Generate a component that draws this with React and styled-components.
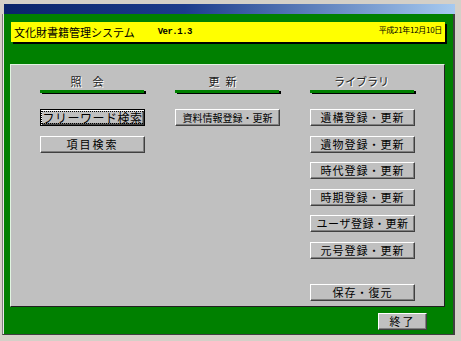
import React from 'react';
import styled, { createGlobalStyle } from 'styled-components';

const Global = createGlobalStyle`
  html, body { margin: 0; padding: 0; background: #d4d0c8; }
  body { font-family: "Noto Sans CJK JP", "Noto Sans", sans-serif; }
  * { box-sizing: border-box; }
`;

const Frame = styled.div`
  width: 461px;
  height: 341px;
  background: #d4d0c8;
  padding: 4px 6px 6px 2px;
  display: flex;
  flex-direction: column;
`;

const TitleBar = styled.div`
  height: 10px;
  margin-left: 2px;
  background: linear-gradient(to right, #0a246a 0%, #1c3c8c 40%, #a6caf0 100%);
`;

const Client = styled.div`
  flex: 1;
  background: #008000;
  border-left: 1px solid #808080;
  border-right: 2px solid #404040;
  border-bottom: 1px solid #404040;
  box-shadow: inset 1px 0 0 #e8e8e8;
  padding: 8px 8px 0 7px;
  display: flex;
  flex-direction: column;
`;

const HeaderBar = styled.div`
  height: 20px;
  margin-left: 1px;
  background: #ffff00;
  box-shadow: 2px 2px 0 #000;
  display: flex;
  align-items: flex-start;
  padding: 0 3px 0 3px;
  color: #000;
`;

const AppTitle = styled.span`
  font-size: 11px;
  line-height: 20px;
  white-space: nowrap;
`;

const Version = styled.span`
  font-family: "Liberation Mono", "DejaVu Sans Mono", monospace;
  font-weight: bold;
  font-size: 9px;
  letter-spacing: -0.5px;
  line-height: 20px;
  margin-left: 23px;
`;

const DateText = styled.span`
  margin-left: auto;
  font-size: 8px;
  line-height: 10px;
  margin-top: 3px;
  letter-spacing: -0.3px;
  white-space: nowrap;
`;

const Panel = styled.div`
  margin-top: 22px;
  height: 243px;
  background: #c0c0c0;
  border: 1px solid;
  border-color: #e0f4e0 #202020 #202020 #e0f4e0;
  padding: 0 29px;
  display: grid;
  grid-template-columns: 105px 105px 105px;
  column-gap: 30px;
  align-items: start;
`;

const Column = styled.div`
  display: flex;
  flex-direction: column;
`;

const ColTitle = styled.div`
  margin-top: 9px;
  height: 14px;
  font-size: 11px;
  line-height: 14px;
  text-align: center;
  color: #202020;
  text-shadow: 1px 1px 0 #ffffff;
  letter-spacing: ${p => p.$ls || 0}px;
  padding-right: ${p => p.$shift || 0}px;
  white-space: nowrap;
`;

const GreenRule = styled.div`
  margin-top: 2px;
  width: 104px;
  height: 3px;
  background: #008000;
  box-shadow: 2px 1px 0 #000;
`;

const ButtonStack = styled.div`
  margin-top: 16px;
  display: flex;
  flex-direction: column;
  gap: 9.6px;
`;

const Button = styled.button`
  height: 17px;
  width: ${p => p.$w || 105}px;
  padding: 0;
  margin: 0;
  margin-top: ${p => p.$mt || 0}px;
  background: #c0c0c0;
  border: 1px solid;
  border-color: #ffffff #404040 #404040 #ffffff;
  box-shadow: inset -1px -1px 0 #808080;
  font-family: "Noto Sans CJK JP", "Noto Sans", sans-serif;
  font-size: ${p => p.$fs || 11}px;
  letter-spacing: ${p => (p.$ls === undefined ? 1 : p.$ls)}px;
  line-height: 15px;
  color: #000;
  display: flex;
  align-items: center;
  justify-content: center;
  white-space: nowrap;
  cursor: default;
  outline: none;
`;

const FocusButton = styled(Button)`
  border: 1px solid #000;
  box-shadow: inset 1px 1px 0 #ffffff, inset -1px -1px 0 #404040, inset -2px -2px 0 #808080;
`;

const FocusLabel = styled.span`
  border: 1px dotted #000;
  padding: 0 1px;
  line-height: 11px;
  letter-spacing: 0.5px;
`;

const ExitButton = styled(Button)`
  align-self: flex-end;
  margin-top: 6px;
  margin-right: 18px;
  letter-spacing: 2px;
`;

export default function App() {
  return (
    <>
      <Global />
      <Frame>
        <TitleBar />
        <Client>
          <HeaderBar>
            <AppTitle>文化財書籍管理システム</AppTitle>
            <Version>Ver.1.3</Version>
            <DateText>平成21年12月10日</DateText>
          </HeaderBar>
          <Panel>
            <Column>
              <ColTitle $shift={11}>照　会</ColTitle>
              <GreenRule />
              <ButtonStack>
                <FocusButton $fs={12} $ls={0}>
                  <FocusLabel>フリーワード検索</FocusLabel>
                </FocusButton>
                <Button $ls={2}>項目検索</Button>
              </ButtonStack>
            </Column>
            <Column>
              <ColTitle $ls={6} $shift={4}>更新</ColTitle>
              <GreenRule />
              <ButtonStack>
                <Button $fs={10} $ls={0}>資料情報登録・更新</Button>
              </ButtonStack>
            </Column>
            <Column>
              <ColTitle $shift={2}>ライブラリ</ColTitle>
              <GreenRule />
              <ButtonStack>
                <Button>遺構登録・更新</Button>
                <Button>遺物登録・更新</Button>
                <Button>時代登録・更新</Button>
                <Button>時期登録・更新</Button>
                <Button $ls={0.5}>ユーザ登録・更新</Button>
                <Button>元号登録・更新</Button>
                <Button $mt={15.4}>保存・復元</Button>
              </ButtonStack>
            </Column>
          </Panel>
          <ExitButton $w={49}>終了</ExitButton>
        </Client>
      </Frame>
    </>
  );
}
